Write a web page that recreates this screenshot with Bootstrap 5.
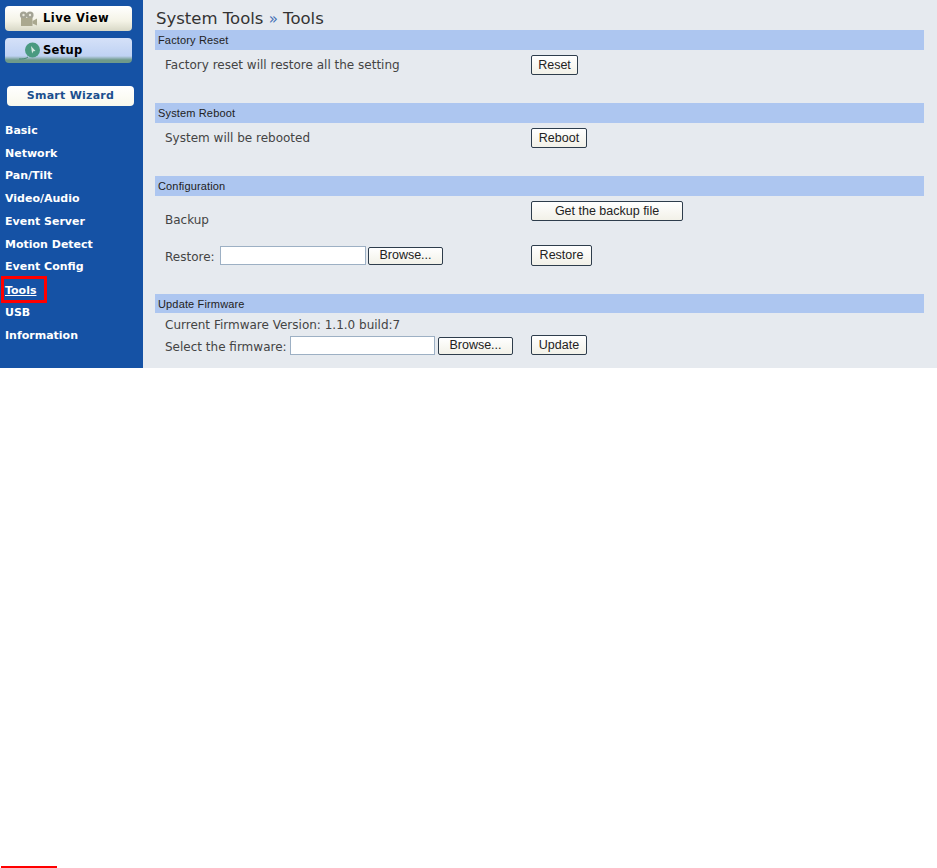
<!DOCTYPE html>
<html lang="en">
<head>
<meta charset="utf-8" />
<meta name="viewport" content="width=device-width, initial-scale=1" />
<title>System Tools</title>
<link href="https://cdn.jsdelivr.net/npm/bootstrap@5.3.3/dist/css/bootstrap.min.css" rel="stylesheet" />
<style>
  body { background: #fff; font-family: "DejaVu Sans", Verdana, sans-serif; color: #333; }
  .cam-page { height: 368px; }
  .side-pane { width: 143px; flex: none; background: #1552a5; padding: 6px 5px 0; }

  /* left menu */
  .top-btn {
    width: 127px; height: 25px; padding-left: 14px; border-radius: 4px; color: #000; font-weight: 700; font-size: 11.5px;
    background: linear-gradient(#fff, #f4f3e6 60%, #d8d8c6); letter-spacing: .5px;
  }
  .top-btn.on { margin-top: 7px; letter-spacing: .3px; background: linear-gradient(#d5e1f8, #bfd2f3 72%, #6f9a8a 88%, #6f9a8a); }
  .cam-ico { width: 18px; height: 15px; margin-right: 6px; }
  .play-ico { width: 21px; height: 18px; margin-right: 3px; }
  .wizard-btn {
    width: 127px; height: 20px; margin: 23px 0 13.9px 2px; border-radius: 4px;
    background: linear-gradient(#fff, #f8f8ec); color: #1b4f8e; font-weight: 700; font-size: 11px;
    line-height: 20px; text-align: center; letter-spacing: .25px;
  }
  .side-link {
    display: block; height: 22.75px; line-height: 22.75px; color: #fff; font-weight: 700; font-size: 11px;
    text-decoration: none;
  }
  .side-link.now {
    height: 27px; margin: -3.4px 91px -.85px -4px; padding-left: 1px;
    border: 3px solid #f00; line-height: 23px; text-decoration: underline;
  }

  /* main area */
  .main-pane { flex: 1; background: #e6eaef; padding: 8px 13px 0 12px; }
  .page-head { font-family: "DejaVu Sans", Verdana, sans-serif; font-size: 16.5px; font-weight: 400; line-height: 21px; margin: 0 0 1px 1px; margin-bottom: 0; color: #333; }
  .page-head i { font-style: normal; color: #3f6fb5; font-size: 15px; }
  .sec-bar { background: #adc6f0; height: 20px; line-height: 20px; font-family: "Liberation Sans", Arial, sans-serif; font-size: 11px; letter-spacing: .15px; padding-left: 3px; color: #222; }
  .sec-bar.short { height: 19px; }
  .sec-row { display: flex; align-items: flex-start; padding: 5px 0 0 10px; font-size: 12px; line-height: 18px; color: #444; }
  .txt-col { width: 366px; flex: none; display: flex; align-items: center; }
  .mid-txt { padding-top: 1px; }
  .low-txt { padding-top: 10px; }
  .ver-row { padding-top: 3px; }
  .fw-row { padding-top: 1px; }
  .res-row { padding-top: 16px; }
  .sec-gap { height: 28px; }
  .lbl-restore { width: 55px; flex: none; padding-top: 3px; }
  .lbl-fw { width: 125px; flex: none; padding-top: 3px; }
  .plain-btn {
    font-family: "Liberation Sans", Arial, sans-serif; font-size: 12.5px; line-height: 17px; height: 20px; padding: 0;
    border: 1px solid #2e3d4c; border-radius: 2px; background: linear-gradient(#fff, #f2f1e8); color: #222; text-align: center; flex: none;
  }
  .file-box { height: 19px; width: 146px; flex: none; background: #fff; border: 1px solid #9db0c4; margin: 0 2px 0 0; padding: 0; }
  .file-box.fw { width: 145px; margin-right: 3px; }
  .w-browse { width: 75px; height: 18px; line-height: 15px; }
  .w-reset { width: 47px; }
  .w-reboot, .w-update { width: 56px; }
  .w-backup { width: 152px; }
  .w-restore { width: 61px; height: 21px; }
  .red-rule { width: 56px; height: 2px; margin: 498px 0 0 1px; background: #f00; }
</style>
</head>
<body>
<div class="cam-page d-flex">
  <nav class="side-pane">
    <div class="top-btn d-flex align-items-center">
      <svg class="cam-ico" viewBox="0 0 18 15"><circle cx="4.5" cy="4" r="3.6" fill="#a3a394"/><circle cx="11" cy="4" r="3.6" fill="#a3a394"/><circle cx="4.5" cy="4" r="1.2" fill="#e8e8dc"/><circle cx="11" cy="4" r="1.2" fill="#e8e8dc"/><rect x="2" y="7" width="11.5" height="8" fill="#aaa88f"/><path d="M13.500 10l4.500-2.500v7l-4.500-2z" fill="#aaa88f"/></svg>
      <span>Live View</span>
    </div>
    <div class="top-btn on d-flex align-items-center">
      <svg class="play-ico" viewBox="0 0 21 18"><circle cx="13.500" cy="8" r="7.500" fill="#4a9a80"/><path d="M12 4l4.500 5-2.200 .2-1.200 2.400z" fill="#d6ebe2"/><path d="M0 17c3 0 7 0 9-2" fill="none" stroke="#4a8a74"/></svg>
      <span>Setup</span>
    </div>
    <div class="wizard-btn">Smart Wizard</div>
    <a class="side-link" href="#">Basic</a>
    <a class="side-link" href="#">Network</a>
    <a class="side-link" href="#">Pan/Tilt</a>
    <a class="side-link" href="#">Video/Audio</a>
    <a class="side-link" href="#">Event Server</a>
    <a class="side-link" href="#">Motion Detect</a>
    <a class="side-link" href="#">Event Config</a>
    <a class="side-link now" href="#">Tools</a>
    <a class="side-link" href="#">USB</a>
    <a class="side-link" href="#">Information</a>
  </nav>
  <main class="main-pane">
    <h1 class="page-head">System Tools <i>»</i> Tools</h1>
    <div class="sec-bar">Factory Reset</div>
    <div class="sec-row">
      <div class="txt-col mid-txt">Factory reset will restore all the setting</div>
      <button class="plain-btn w-reset">Reset</button>
    </div>
    <div class="sec-gap"></div>
    <div class="sec-bar">System Reboot</div>
    <div class="sec-row">
      <div class="txt-col mid-txt">System will be rebooted</div>
      <button class="plain-btn w-reboot">Reboot</button>
    </div>
    <div class="sec-gap"></div>
    <div class="sec-bar">Configuration</div>
    <div class="sec-row">
      <div class="txt-col low-txt">Backup</div>
      <button class="plain-btn w-backup">Get the backup file</button>
    </div>
    <div class="sec-row res-row">
      <div class="txt-col">
        <span class="lbl-restore">Restore:</span>
        <input class="file-box" type="text" />
        <button class="plain-btn w-browse">Browse...</button>
      </div>
      <button class="plain-btn w-restore">Restore</button>
    </div>
    <div class="sec-gap"></div>
    <div class="sec-bar short">Update Firmware</div>
    <div class="sec-row ver-row">Current Firmware Version: 1.1.0 build:7</div>
    <div class="sec-row fw-row">
      <div class="txt-col">
        <span class="lbl-fw">Select the firmware:</span>
        <input class="file-box fw" type="text" />
        <button class="plain-btn w-browse">Browse...</button>
      </div>
      <button class="plain-btn w-update">Update</button>
    </div>
  </main>
</div>
<div class="red-rule"></div>
<script src="https://cdn.jsdelivr.net/npm/bootstrap@5.3.3/dist/js/bootstrap.bundle.min.js"></script>
</body>
</html>
